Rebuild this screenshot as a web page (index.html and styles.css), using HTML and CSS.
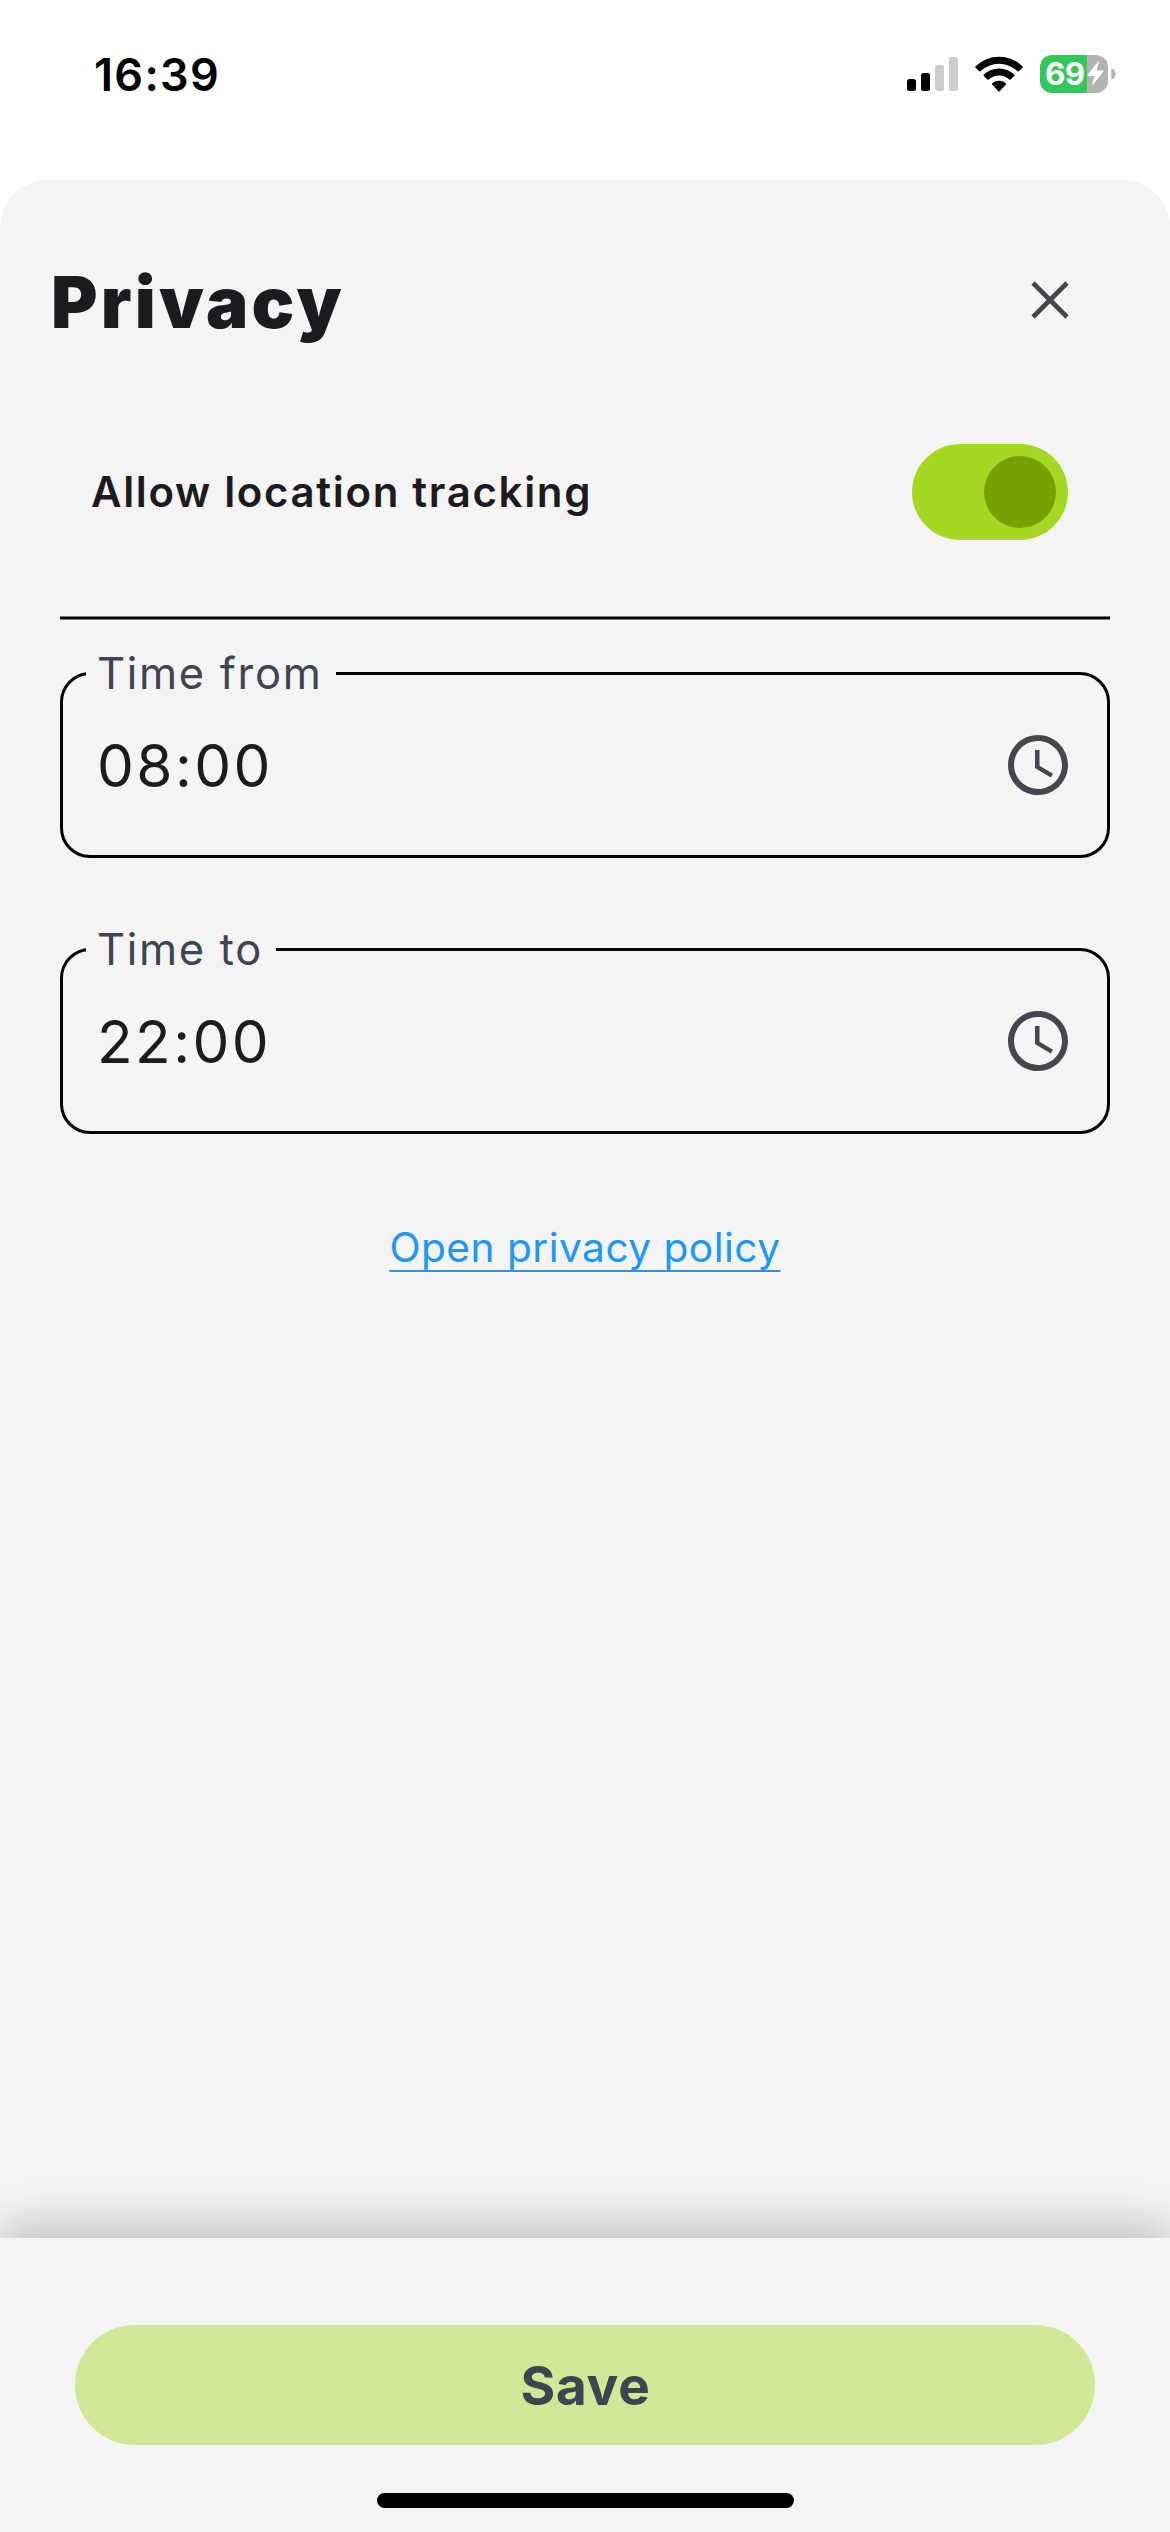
FILE: index.html
```html
<!DOCTYPE html>
<html lang="en">
<head>
<meta charset="utf-8">
<title>Privacy</title>
<link rel="stylesheet" href="styles.css">
</head>
<body>
<div class="screen">
  <div class="status-bar">
    <span class="time">16:39</span>
    <div class="status-icons">
      <svg class="signal" viewBox="0 0 51 34" width="51" height="34">
        <rect x="0" y="22" width="9" height="12" rx="2.5"/>
        <rect x="14" y="16" width="9" height="18" rx="2.5"/>
        <rect class="off" x="28" y="8" width="9" height="26" rx="2.5"/>
        <rect class="off" x="42" y="0" width="9" height="34" rx="2.5"/>
      </svg>
      <svg viewBox="0 0 48 36" width="48" height="36">
        <path d="M0.6 10.2A33.5 33.5 0 0 1 47.4 10.2Q48.2 11 47.4 11.8L43.9 15.2Q43.2 15.8 42.4 15.1A26.6 26.6 0 0 0 5.6 15.1Q4.8 15.8 4.1 15.2L0.6 11.8Q-0.2 11 0.6 10.2Z"/>
        <path d="M8.8 18.6A22 22 0 0 1 39.2 18.6Q39.9 19.3 39.2 20L35.6 23.6Q35 24.2 34.2 23.6A15 15 0 0 0 13.8 23.6Q13 24.2 12.4 23.6L8.8 20Q8.1 19.3 8.8 18.6Z"/>
        <path d="M17.2 27.2A10.6 10.6 0 0 1 30.8 27.2Q31.5 27.9 30.8 28.6L24.7 35.2Q24 35.9 23.3 35.2L17.2 28.6Q16.5 27.9 17.2 27.2Z"/>
      </svg>
      <div class="battery">
        <div class="battery-body">
          <span class="battery-level">69</span>
          <svg class="bolt" viewBox="0 0 17 25" width="17" height="25"><path d="M11.2 0.6Q12.2-0.2 11.8 1.2L9.6 9.6H16Q17.1 9.7 16.4 10.6L5.8 24Q4.8 24.8 5.2 23.5L7.5 14.9H1Q-0.1 14.8 0.6 13.9Z"/></svg>
        </div>
        <svg viewBox="0 0 5 12" width="5" height="12"><path d="M0.3 0.5C3 1.3 4.6 3.4 4.6 6S3 10.7 0.3 11.5Z" fill="#b3b3b3"/></svg>
      </div>
    </div>
  </div>

  <main class="sheet">
    <header class="sheet-header">
      <h1>Privacy</h1>
      <button class="close" aria-label="Close">
        <svg viewBox="0 0 38 38" width="38" height="38"><path d="M2 2L36 36M36 2L2 36"/></svg>
      </button>
    </header>

    <label class="setting">
      <span class="setting-name">Allow location tracking</span>
      <span class="switch"><span class="thumb"></span></span>
    </label>
    <div class="divider"></div>

    <fieldset class="field">
      <legend>Time from</legend>
      <div class="field-row">
        <span>08:00</span>
        <svg viewBox="0 0 24 24" width="72" height="72"><path d="M11.99 2C6.47 2 2 6.48 2 12s4.47 10 9.99 10C17.52 22 22 17.52 22 12S17.52 2 11.99 2zM12 20c-4.42 0-8-3.58-8-8s3.58-8 8-8 8 3.58 8 8-3.58 8-8 8z"/><path d="M12.5 7H11v6l5.25 3.15.75-1.23-4.5-2.67z"/></svg>
      </div>
    </fieldset>
    <fieldset class="field">
      <legend>Time to</legend>
      <div class="field-row">
        <span>22:00</span>
        <svg viewBox="0 0 24 24" width="72" height="72"><path d="M11.99 2C6.47 2 2 6.48 2 12s4.47 10 9.99 10C17.52 22 22 17.52 22 12S17.52 2 11.99 2zM12 20c-4.42 0-8-3.58-8-8s3.58-8 8-8 8 3.58 8 8-3.58 8-8 8z"/><path d="M12.5 7H11v6l5.25 3.15.75-1.23-4.5-2.67z"/></svg>
      </div>
    </fieldset>

    <a class="policy">Open privacy policy</a>
  </main>

  <footer class="actions">
    <button class="save">Save</button>
    <div class="home-indicator"></div>
  </footer>
</div>
</body>
</html>
```

FILE: styles.css
```css
* { box-sizing: border-box; }
body { margin: 0; background: #fff; font-family: Inter, "Liberation Sans", sans-serif; color: #1d1b20; }
svg { display: block; flex: none; }
button { border: 0; padding: 0; background: none; font-family: inherit; }

.screen { width: 1170px; height: 2532px; display: flex; flex-direction: column; overflow: hidden; }

.status-bar { height: 149px; margin-bottom: 31px; padding: 0 54px 0 94px; display: flex; align-items: center; justify-content: space-between; }
.time { font-size: 45px; font-weight: 600; letter-spacing: 1.3px; color: #000; }
.status-icons { display: flex; align-items: center; gap: 17px; padding-bottom: 2px; }
.signal .off { fill: #ccc; }
.battery { display: flex; align-items: center; gap: 3px; }
.battery-body { width: 68px; height: 38px; border-radius: 12px; background: linear-gradient(90deg, #34c759 47px, #b3b3b3 47px); display: flex; align-items: center; padding-left: 5px; }
.battery-level { width: 42px; font-size: 31.5px; font-weight: 700; letter-spacing: -0.8px; color: #fff; line-height: 38px; }
.bolt { fill: #fff; }

.sheet { flex: 1; display: flex; flex-direction: column; background: #f4f4f4; border-radius: 48px 48px 0 0; }
.sheet-header { height: 243px; padding: 0 101px 0 51px; display: flex; align-items: center; justify-content: space-between; }
h1 { margin: 0; font-size: 71px; font-weight: 900; letter-spacing: 3.2px; }
.close { margin-bottom: 3px; }
.close path { stroke: #49454f; stroke-width: 4.6; }

.setting { height: 138px; padding: 0 102px 0 91px; display: flex; align-items: center; justify-content: space-between; font-size: 42px; font-weight: 600; letter-spacing: 1.65px; }
.setting-name { padding-bottom: 2px; }
.switch { width: 156px; height: 96px; border-radius: 48px; background: #a5d823; padding: 12px; display: flex; justify-content: flex-end; }
.thumb { width: 72px; height: 72px; border-radius: 50%; background: #74a100; }

.divider { height: 4px; margin: 55px 60px 24px; background: linear-gradient(#7a7a7a 1px, #000 1px 3px, #7a7a7a 3px); }

.field { height: 214px; margin: 0 60px 62px; padding: 0 23px; border: 3px solid #000; border-radius: 30px; }
.field legend { height: 59px; line-height: 59px; padding: 0 13px 0 11px; font-size: 43.5px; letter-spacing: 1.7px; color: #3f4450; }
.field-row { height: 60px; margin-top: 32px; padding: 0 10px 0 11px; display: flex; align-items: center; justify-content: space-between; font-size: 58.5px; letter-spacing: 2.4px; }
.field-row svg { fill: #49454f; }

.policy { align-self: center; margin-top: 22px; line-height: 60px; font-size: 40.7px; letter-spacing: 0.45px; color: #2196f3; text-decoration: underline; text-decoration-thickness: 2.4px; text-underline-offset: 7.5px; text-decoration-skip-ink: none; }

.actions { height: 294px; padding: 87px 75px 0; background: #f4f4f4; box-shadow: 0 -15px 40px rgba(0, 0, 0, 0.2); display: flex; flex-direction: column; }
.save { height: 120px; padding: 1px 0 0 1px; border-radius: 60px; background: #d0e795; color: #3f4450; font-size: 53px; font-weight: 650; letter-spacing: 0.8px; }
.home-indicator { align-self: center; width: 417px; height: 15px; margin-top: 48px; border-radius: 8px; background: #000; }
```
